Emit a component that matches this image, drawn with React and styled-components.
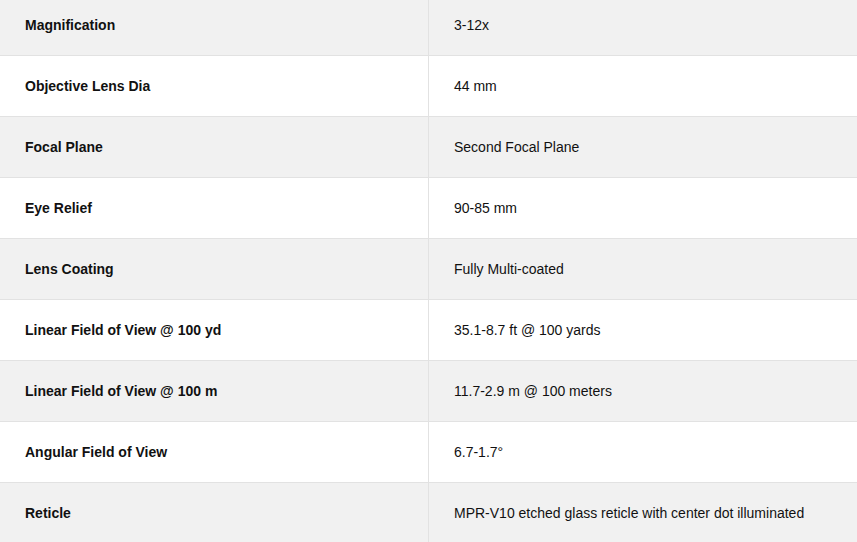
import React from 'react';
import styled, { createGlobalStyle } from 'styled-components';

const GlobalStyle = createGlobalStyle`
  html, body {
    margin: 0;
    padding: 0;
    background: #fff;
    overflow: hidden;
  }
  body {
    font-family: "Liberation Sans", Arial, sans-serif;
  }
`;

const specs = [
  ['Magnification', '3-12x'],
  ['Objective Lens Dia', '44 mm'],
  ['Focal Plane', 'Second Focal Plane'],
  ['Eye Relief', '90-85 mm'],
  ['Lens Coating', 'Fully Multi-coated'],
  ['Linear Field of View @ 100 yd', '35.1-8.7 ft @ 100 yards'],
  ['Linear Field of View @ 100 m', '11.7-2.9 m @ 100 meters'],
  ['Angular Field of View', '6.7-1.7°'],
  ['Reticle', 'MPR-V10 etched glass reticle with center dot illuminated'],
];

const Table = styled.div`
  display: flex;
  flex-direction: column;
  width: 857px;
  margin-top: -5px;
`;

const Row = styled.div`
  display: grid;
  grid-template-columns: 429px 1fr;
  height: 61px;
  box-sizing: border-box;
  border-bottom: 1px solid #e2e2e2;
  background: ${p => (p.$shaded ? '#f1f1f1' : '#fff')};
`;

const Cell = styled.div`
  display: flex;
  align-items: center;
  box-sizing: border-box;
  padding: 0 25px;
  font-size: 14px;
  color: #111;
  font-weight: ${p => (p.$label ? 700 : 400)};
  border-right: ${p => (p.$label ? '1px solid #e2e2e2' : 'none')};
`;

export default function App() {
  return (
    <>
      <GlobalStyle />
      <Table>
        {specs.map(([label, value], i) => (
          <Row key={label} $shaded={i % 2 === 0}>
            <Cell $label>{label}</Cell>
            <Cell>{value}</Cell>
          </Row>
        ))}
      </Table>
    </>
  );
}
